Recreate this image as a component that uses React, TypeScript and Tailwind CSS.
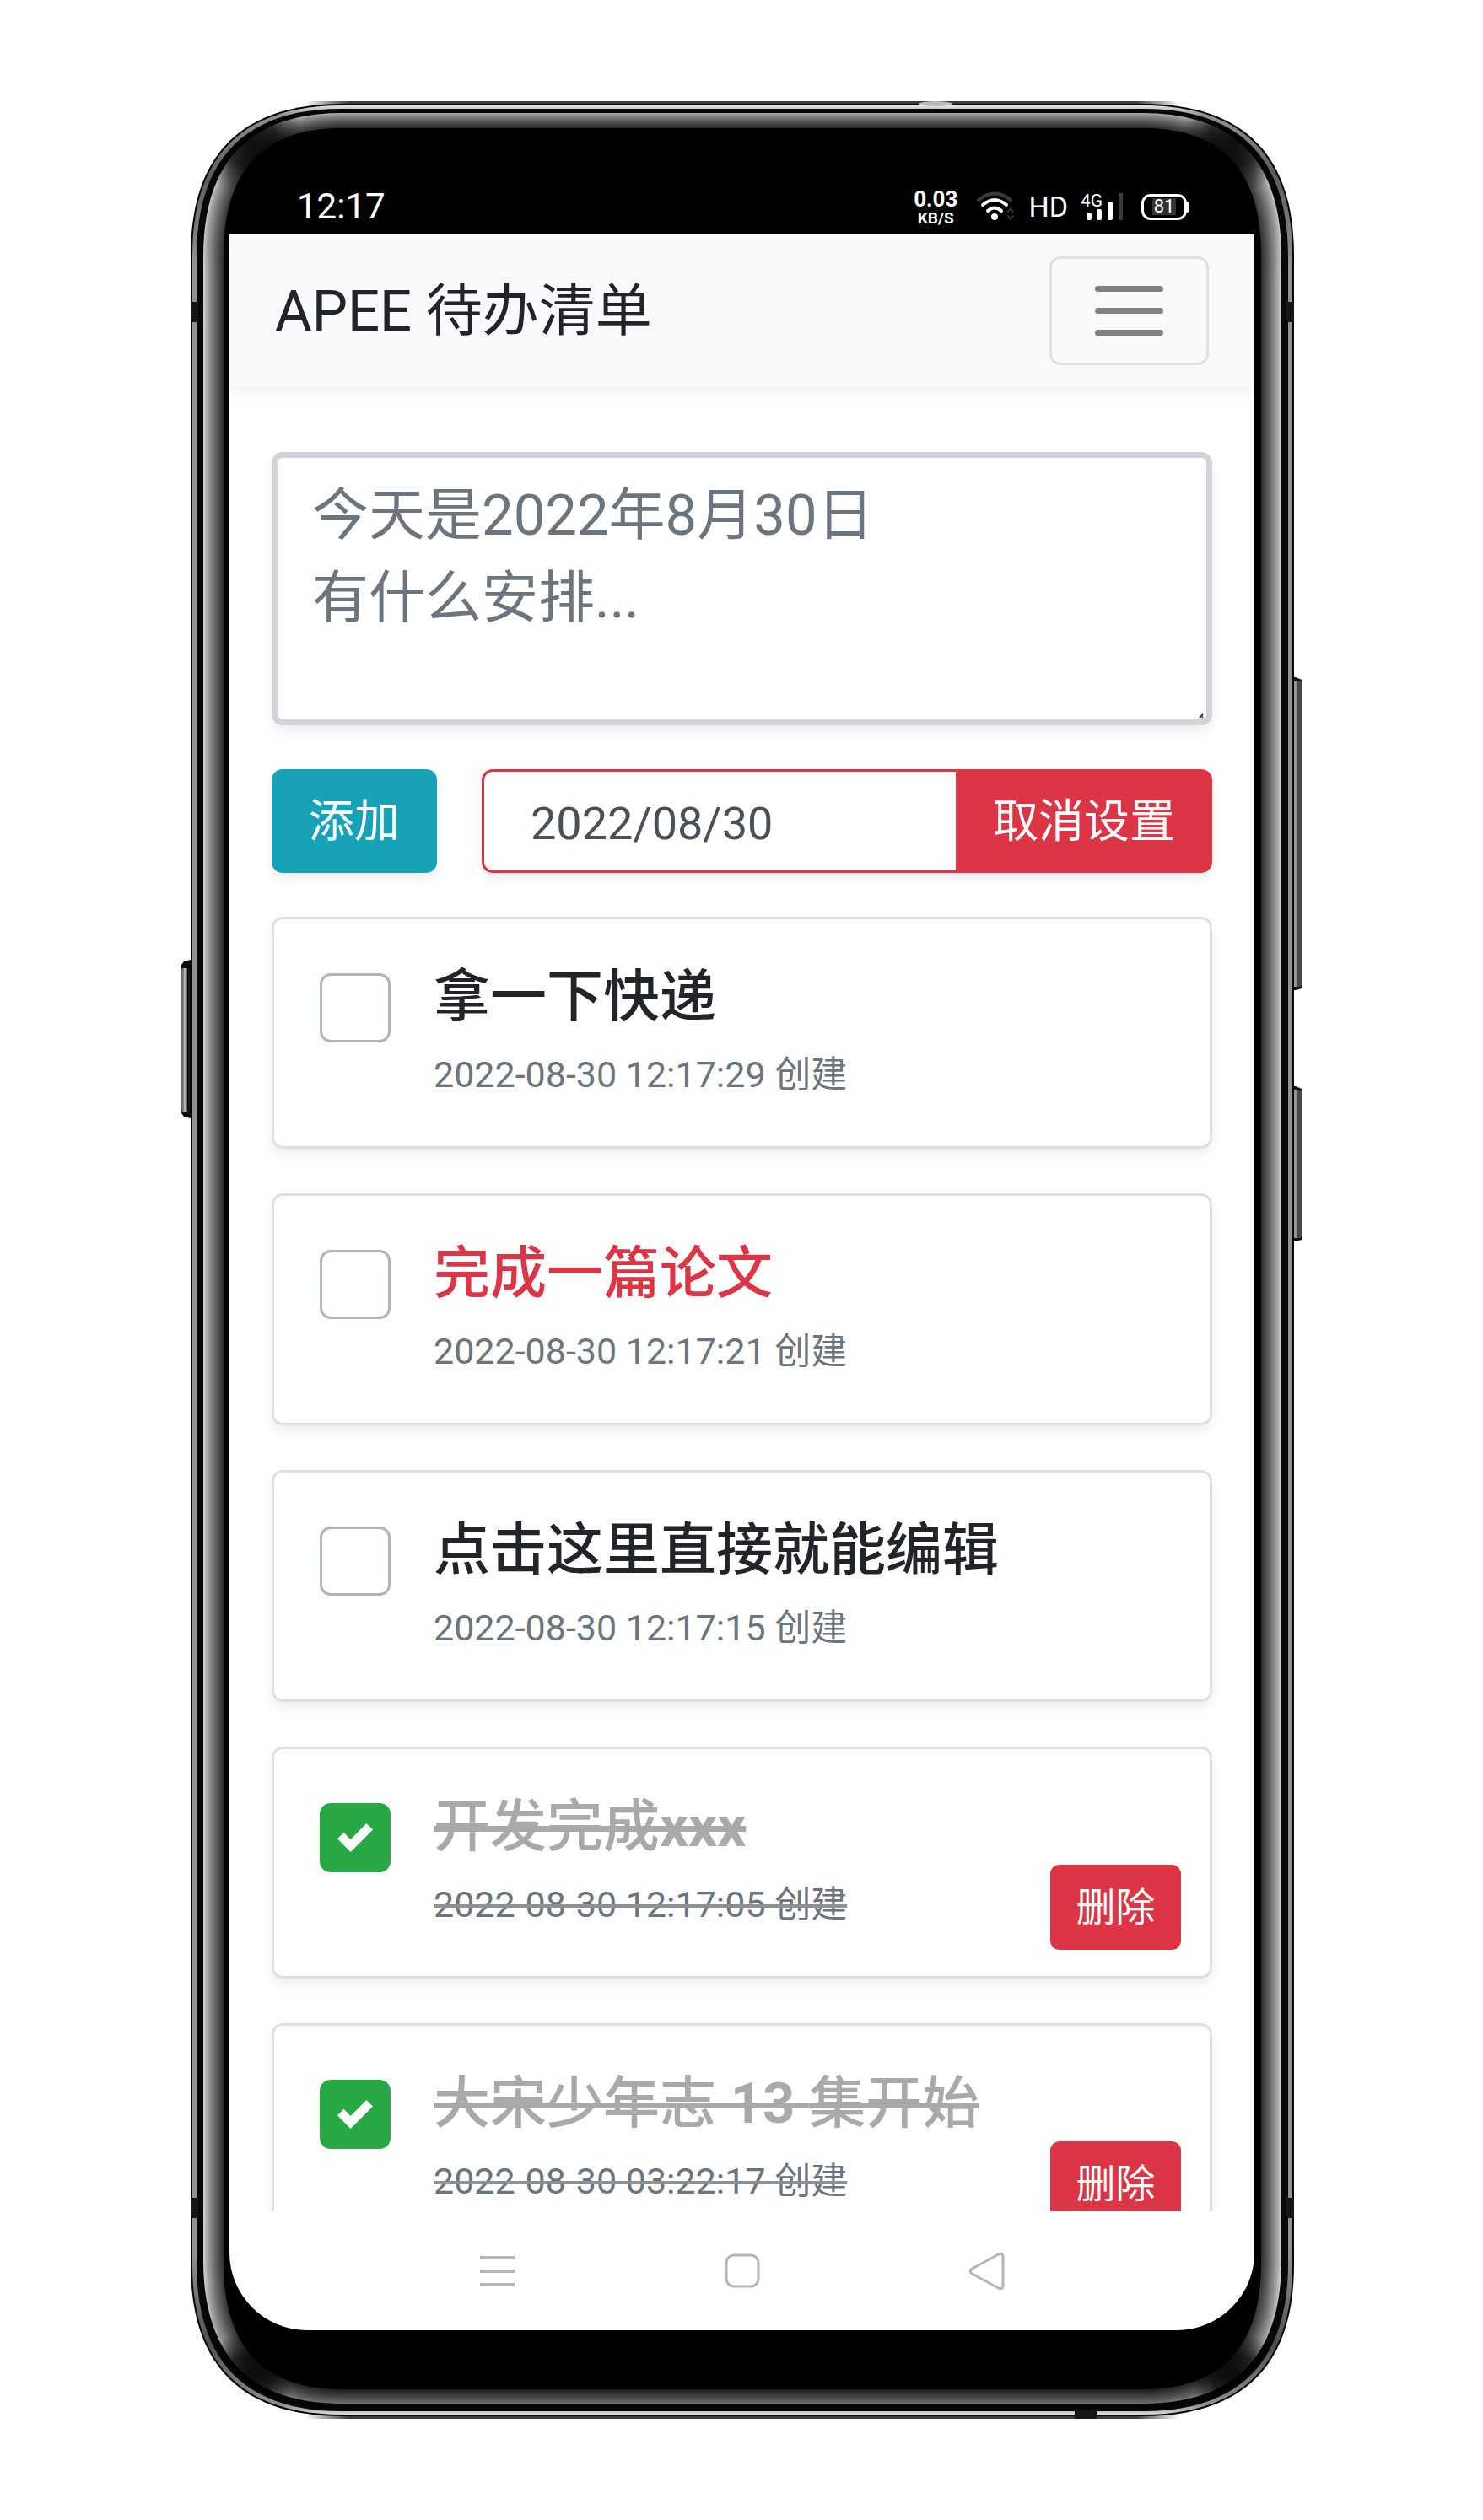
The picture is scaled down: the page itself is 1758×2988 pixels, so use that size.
import { useState } from "react";

type Todo = {
  id: string;
  title: { text: string; latin?: boolean }[];
  created: string;
  important?: boolean;
  done?: boolean;
};

const initialTodos: Todo[] = [
  { id: "t1", title: [{ text: "拿一下快递" }], created: "2022-08-30 12:17:29 创建" },
  { id: "t2", title: [{ text: "完成一篇论文" }], created: "2022-08-30 12:17:21 创建", important: true },
  { id: "t3", title: [{ text: "点击这里直接就能编辑" }], created: "2022-08-30 12:17:15 创建" },
  {
    id: "t4",
    title: [{ text: "开发完成" }, { text: "xxx", latin: true }],
    created: "2022-08-30 12:17:05 创建",
    done: true,
  },
  {
    id: "t5",
    title: [{ text: "大宋少年志" }, { text: " 13 ", latin: true }, { text: "集开始" }],
    created: "2022-08-30 03:22:17 创建",
    done: true,
  },
];

const W = 1308;
const H = 2748;

/* Rounded outline inset from the phone's edges; rx/ry are the corner extents. */
function outline(ix: number, top: number, bottom: number, rx: number, ry: number) {
  const l = ix;
  const r = W - ix;
  const t = top;
  const b = H - bottom;
  const cx = rx * 0.31;
  const cy = ry * 0.36;
  return [
    `M${l} ${t + ry}`,
    `C${l} ${t + cy} ${l + cx} ${t} ${l + rx} ${t}`,
    `L${r - rx} ${t}`,
    `C${r - cx} ${t} ${r} ${t + cy} ${r} ${t + ry}`,
    `L${r} ${b - ry}`,
    `C${r} ${b - cy} ${r - cx} ${b} ${r - rx} ${b}`,
    `L${l + rx} ${b}`,
    `C${l + cx} ${b} ${l} ${b - cy} ${l} ${b - ry}`,
    "Z",
  ].join(" ");
}

const STEPS = 14;
const bevel = Array.from({ length: STEPS }, (_, i) => {
  const k = i / (STEPS - 1);
  const shade = Math.round(204 - 160 * Math.pow(k, 0.8));
  return {
    d: outline(15 + 23 * k, 14 + 17 * k, 18 + 16 * k, 165 - 15 * k, 170 - 5 * k),
    fill: `rgb(${shade},${shade + 2},${shade + 3})`,
  };
});

function PhoneFrame() {
  return (
    <svg
      aria-hidden="true"
      className="absolute inset-0 -z-10 h-full w-full overflow-visible"
      viewBox={`0 0 ${W} ${H}`}
      preserveAspectRatio="none"
    >
      <defs>
        <linearGradient id="rim" x1="0" y1="0" x2="0" y2="1">
          <stop offset="0" stopColor="#e8e8e8" />
          <stop offset="0.004" stopColor="#8f9193" />
          <stop offset="0.03" stopColor="#5a5c5e" />
          <stop offset="0.07" stopColor="#8f9193" />
          <stop offset="0.93" stopColor="#8f9193" />
          <stop offset="0.97" stopColor="#4c4e50" />
          <stop offset="0.996" stopColor="#8f9193" />
          <stop offset="1" stopColor="#dcdee0" />
        </linearGradient>
        <linearGradient id="shade" x1="0" y1="0" x2="0" y2="1">
          <stop offset="0" stopColor="#000" stopOpacity="0.2" />
          <stop offset="0.03" stopColor="#000" stopOpacity="0.1" />
          <stop offset="0.08" stopColor="#000" stopOpacity="0" />
          <stop offset="0.94" stopColor="#000" stopOpacity="0" />
          <stop offset="0.98" stopColor="#000" stopOpacity="0.3" />
          <stop offset="1" stopColor="#000" stopOpacity="0.55" />
        </linearGradient>
        <linearGradient id="edge" x1="0" y1="0" x2="1" y2="0">
          <stop offset="0" stopColor="#3a3a3a" stopOpacity="0" />
          <stop offset="0.05" stopColor="#3a3a3a" />
          <stop offset="0.95" stopColor="#3a3a3a" />
          <stop offset="1" stopColor="#3a3a3a" stopOpacity="0" />
        </linearGradient>
        <linearGradient id="key" x1="0" y1="0" x2="1" y2="0">
          <stop offset="0" stopColor="#2b2c2e" />
          <stop offset="0.3" stopColor="#a9abad" />
          <stop offset="0.6" stopColor="#8d8f91" />
          <stop offset="0.68" stopColor="#47474a" />
          <stop offset="1" stopColor="#4a4a4d" />
        </linearGradient>
        <linearGradient id="keyLeft" x1="0" y1="0" x2="1" y2="0">
          <stop offset="0" stopColor="#5c5e60" />
          <stop offset="0.25" stopColor="#7d7f80" />
          <stop offset="0.35" stopColor="#b4b6b7" />
          <stop offset="0.6" stopColor="#9b9d9e" />
          <stop offset="0.75" stopColor="#0c0c0c" />
          <stop offset="1" stopColor="#1c1c1c" />
        </linearGradient>
        <radialGradient id="corner">
          <stop offset="0" stopColor="#000" stopOpacity="0.95" />
          <stop offset="0.5" stopColor="#000" stopOpacity="0.75" />
          <stop offset="1" stopColor="#000" stopOpacity="0" />
        </radialGradient>
        <clipPath id="body">
          <path d={outline(10, 11, 12, 168, 172)} />
        </clipPath>
      </defs>

      <path d="M0 1018 L-8 1020 L-11 1024 L-11 1200 L-8 1204 L0 1206 Z" fill="#0a0a0a" />
      <rect x="-11" y="1028" width="10" height="170" rx="2" fill="url(#keyLeft)" />
      <path d="M1300 683 L1310 683 L1317 686 L1317 1052 L1310 1054 L1300 1054 Z" fill="#111" />
      <rect x="1301" y="687" width="16" height="363" rx="3" fill="url(#key)" />
      <path d="M1300 1168 L1310 1168 L1317 1171 L1317 1350 L1310 1352 L1300 1352 Z" fill="#111" />
      <rect x="1301" y="1172" width="16" height="176" rx="3" fill="url(#key)" />

      <rect x="136" y="0" width="1036" height="6" fill="url(#edge)" />
      <rect x="136" y={H - 6} width="1036" height="6" fill="url(#edge)" />

      <path d={outline(0, 3, 3, 180, 180)} fill="#050606" />
      <path d={outline(2, 5, 5, 178, 178)} fill="url(#rim)" />
      <path d={outline(7, 9, 9, 172, 176)} fill="#06080a" />
      <ellipse cx="883" cy="3" rx="20" ry="3" fill="#b9bab8" />
      {bevel.map((b) => (
        <path key={b.d} d={b.d} fill={b.fill} />
      ))}
      <g clipPath="url(#body)">
        <rect width={W} height={H} fill="url(#shade)" />
        <circle cx="66" cy="42" r="66" fill="url(#corner)" />
        <circle cx={W - 66} cy="42" r="66" fill="url(#corner)" />
        <circle cx="66" cy={H - 46} r="56" fill="url(#corner)" />
        <circle cx={W - 66} cy={H - 46} r="56" fill="url(#corner)" />
      </g>
      <path d={outline(39, 32, 35, 140, 150)} fill="#000" />

      <g fill="#141616">
        <rect x="0" y="238" width="9" height="24" />
        <rect x={W - 9} y="238" width="9" height="24" />
        <rect x="0" y="2486" width="9" height="24" />
        <rect x={W - 9} y="2486" width="9" height="24" />
        <rect x="1048" y={H - 10} width="26" height="10" />
      </g>
    </svg>
  );
}

function StatusBar() {
  return (
    <div className="flex h-[126px] shrink-0 items-center justify-between pt-[60px] pr-[77px] pl-[80px] text-white">
      <time className="text-[42px] leading-[44px]">12:17</time>
      <div className="flex items-center">
        <div className="flex flex-col items-center font-bold">
          <span className="text-[26px] leading-[26px]">0.03</span>
          <span className="text-[19px] leading-[19px]">KB/S</span>
        </div>
        <svg className="ml-[22px] h-[36px] w-[48px]" viewBox="0 0 48 36" fill="none" strokeLinecap="round">
          <path d="M3 10 Q22 -5 41 10" stroke="#3a3a3a" strokeWidth="4" />
          <path d="M8 16 Q22 4 36 16" stroke="#fff" strokeWidth="4" />
          <path d="M14 23 Q22 16 30 23" stroke="#fff" strokeWidth="4" />
          <circle cx="22" cy="30" r="4" fill="#fff" />
          <path d="M38 24 L41 20 L44 24 M38 29 L41 33 L44 29" stroke="#333" strokeWidth="2" />
        </svg>
        <span className="ml-[14px] text-[34px] leading-[36px]">HD</span>
        <div className="ml-[15px] grid">
          <span className="col-start-1 row-start-1 text-[21px] leading-[20px]">4G</span>
          <svg className="col-start-1 row-start-1 h-[34px] w-[52px]" viewBox="0 0 52 34" fill="#fff">
            <rect x="7" y="24" width="6" height="9" rx="2" />
            <rect x="19" y="20" width="6" height="13" rx="2" />
            <rect x="32" y="11" width="6" height="22" rx="2" />
            <rect x="45" y="1" width="5" height="32" rx="1" fill="#3a3a3a" />
          </svg>
        </div>
        <div className="ml-[20px] flex items-center">
          <div className="flex h-[31px] w-[54px] items-center justify-center rounded-[11px] border-[3px] border-white">
            <span className="bg-[#333] px-[2px] text-[22px] leading-[20px]">81</span>
          </div>
          <span className="h-[13px] w-[3px] rounded-r-full bg-white" />
        </div>
      </div>
    </div>
  );
}

function Navbar() {
  return (
    <header className="z-10 flex shrink-0 items-center justify-between bg-[#f8f9fb] px-[54px] py-[26px] shadow-[0_7px_14px_rgba(0,0,0,0.06)]">
      <a href="#" className="text-[67px] leading-[80px] text-[#212529]">
        APEE 待办清单
      </a>
      <button
        type="button"
        aria-label="菜单"
        className="flex h-[129px] w-[189px] flex-col items-center justify-center gap-[19px] rounded-[13px] border-[3px] border-[#dfe0e2]"
      >
        <span className="h-[7px] w-[81px] rounded-full bg-[#808182]" />
        <span className="h-[7px] w-[81px] rounded-full bg-[#808182]" />
        <span className="h-[7px] w-[81px] rounded-full bg-[#808182]" />
      </button>
    </header>
  );
}

function Composer() {
  return (
    <form className="flex flex-col gap-[52px]" onSubmit={(e) => e.preventDefault()}>
      <div className="relative">
        <textarea
          aria-label="待办内容"
          placeholder={"今天是2022年8月30日\n有什么安排..."}
          className="block h-[324px] w-full resize-none rounded-[13px] border-[7px] border-[#d0d4d9] bg-white px-[41px] pt-[19px] text-[67px] leading-[98px] text-[#495057] shadow-[0_7px_14px_rgba(0,0,0,0.07)] outline-none placeholder:text-[#6c757d] placeholder:opacity-100"
        />
        <svg aria-hidden="true" className="absolute right-[10px] bottom-[8px] h-[6px] w-[6px]" viewBox="0 0 6 6">
          <path d="M1 5 L5 1 M4 5 L5 4" stroke="#333" strokeWidth="2" />
        </svg>
      </div>
      <div className="flex gap-[53px] text-[54px] leading-[80px]">
        <button
          type="submit"
          className="h-[123px] w-[196px] rounded-[13px] bg-[#17a2b8] pt-[3px] text-white shadow-[0_7px_14px_rgba(0,0,0,0.07)]"
        >
          添加
        </button>
        <div className="flex h-[123px] min-w-0 flex-1 rounded-[13px] shadow-[0_7px_14px_rgba(0,0,0,0.07)]">
          <input
            type="text"
            aria-label="截止日期"
            defaultValue="2022/08/30"
            className="min-w-0 flex-1 rounded-l-[13px] border-[3px] border-r-0 border-[#dc3545] bg-white pt-[7px] pl-[55px] text-[#495057] outline-none"
          />
          <button type="button" className="w-[304px] shrink-0 rounded-r-[13px] bg-[#dc3545] pt-[3px] text-white">
            取消设置
          </button>
        </div>
      </div>
    </form>
  );
}

function TodoCard({ todo, onToggle, onDelete }: { todo: Todo; onToggle: () => void; onDelete: () => void }) {
  const titleColor = todo.done
    ? "text-[#a9a9a9] line-through decoration-[7px]"
    : todo.important
      ? "text-[#dc3545]"
      : "text-[#212529]";
  return (
    <li className="flex min-h-[275px] shrink-0 rounded-[13px] border-[3px] border-[#dfe0e3] bg-white pr-[34px] pl-[54px] shadow-[0_7px_14px_rgba(0,0,0,0.07)]">
      <div className="mt-[64px] grid shrink-0 self-start">
        <input
          id={todo.id}
          type="checkbox"
          checked={!!todo.done}
          onChange={onToggle}
          className="col-start-1 row-start-1 h-[82px] w-[84px] appearance-none rounded-[13px] border-[3px] border-[#adb5bd] bg-white checked:border-[#28a745] checked:bg-[#28a745]"
        />
        {todo.done && (
          <svg
            aria-hidden="true"
            className="pointer-events-none col-start-1 row-start-1 h-[42px] w-[42px] place-self-center"
            viewBox="0 0 8 8"
            fill="#fff"
          >
            <path d="M6.564.75l-3.59 3.612-1.538-1.55L0 4.26l2.974 2.99L8 2.193z" />
          </svg>
        )}
      </div>
      <div className="ml-[51px] flex min-w-0 flex-1 flex-col items-start gap-[19px] pt-[52px] pb-[40px] whitespace-nowrap">
        <label htmlFor={todo.id} className={`text-[67px] leading-[80px] font-medium whitespace-pre ${titleColor}`}>
          {todo.title.map((part) => (
            <span key={part.text} className={part.latin ? "font-bold" : undefined}>
              {part.text}
            </span>
          ))}
        </label>
        <small
          className={`text-[43px] leading-[66px] text-[#6c757d] ${todo.done ? "line-through decoration-[#8d9194] decoration-[4px]" : ""}`}
        >
          {todo.created}
        </small>
      </div>
      {todo.done && (
        <button
          type="button"
          onClick={onDelete}
          className="mb-[31px] h-[101px] w-[155px] shrink-0 self-end rounded-[11px] bg-[#dc3545] text-[47px] leading-[70px] text-white"
        >
          删除
        </button>
      )}
    </li>
  );
}

function SystemNav() {
  return (
    <nav aria-label="系统导航" className="flex h-[141px] shrink-0 items-center justify-center gap-[248px] text-[#b5b5b5]">
      <button type="button" aria-label="最近任务">
        <svg className="h-[44px] w-[42px]" viewBox="0 0 42 44" stroke="currentColor" strokeWidth="4">
          <path d="M0 6H41M0 22H41M0 38H41" />
        </svg>
      </button>
      <button type="button" aria-label="主页">
        <svg className="h-[44px] w-[42px]" viewBox="0 0 42 44" fill="none" stroke="currentColor" strokeWidth="3">
          <rect x="2" y="3" width="38" height="37" rx="9" />
        </svg>
      </button>
      <button type="button" aria-label="返回">
        <svg
          className="h-[44px] w-[42px]"
          viewBox="0 0 42 44"
          fill="none"
          stroke="currentColor"
          strokeWidth="3"
          strokeLinejoin="round"
        >
          <path d="M2.500 24.500 Q0 22 2.500 19.500 L35 1.800 Q40 0 40 5 V39 Q40 44 35 42.200 Z" />
        </svg>
      </button>
    </nav>
  );
}

export default function App() {
  const [todos, setTodos] = useState(initialTodos);
  return (
    <main className="h-screen bg-white pt-[120px] pr-[224px] pb-[120px] pl-[226px] font-[Roboto,'Noto_Sans_CJK_SC',sans-serif]">
      <div className="relative isolate flex h-full flex-col pt-[32px] pr-[47px] pb-[105px] pl-[46px]">
        <PhoneFrame />
        <StatusBar />
        <div className="flex min-h-0 flex-1 flex-col overflow-hidden rounded-b-[92px] bg-white">
          <Navbar />
          <div className="flex min-h-0 flex-1 flex-col gap-[52px] overflow-y-auto px-[50px] pt-[77px] [scrollbar-width:none]">
            <Composer />
            <ul className="flex flex-col gap-[53px]">
              {todos.map((todo) => (
                <TodoCard
                  key={todo.id}
                  todo={todo}
                  onToggle={() => setTodos(todos.map((t) => (t.id === todo.id ? { ...t, done: !t.done } : t)))}
                  onDelete={() => setTodos(todos.filter((t) => t.id !== todo.id))}
                />
              ))}
            </ul>
          </div>
          <SystemNav />
        </div>
      </div>
    </main>
  );
}
